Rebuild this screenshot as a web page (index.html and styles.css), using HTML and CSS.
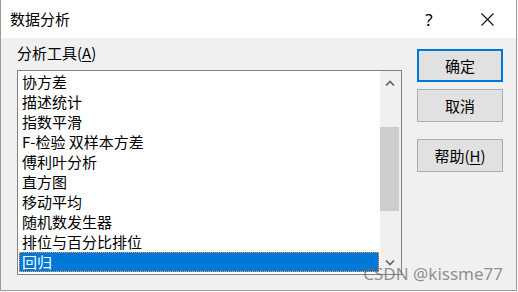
FILE: index.html
```html
<!DOCTYPE html>
<html lang="zh-CN">
<head>
  <meta charset="UTF-8">
  <title>数据分析</title>
  <link rel="stylesheet" href="styles.css">
</head>
<body>
  <div class="dialog">
    <div class="titlebar">
      <span class="title">数据分析</span>
      <span class="help-btn">?</span>
      <span class="close-btn">
        <svg width="13" height="13" viewBox="0 0 13 13"><path d="M0.5 0.5 L12.5 12.5 M12.5 0.5 L0.5 12.5" stroke="#111" stroke-width="1.1" fill="none"/></svg>
      </span>
    </div>

    <div class="content">
      <div class="left-panel">
        <div class="label">分析工具(<u>A</u>)</div>
        <div class="listbox">
          <ul class="items">
            <li>协方差</li>
            <li>描述统计</li>
            <li>指数平滑</li>
            <li>F-检验 双样本方差</li>
            <li>傅利叶分析</li>
            <li>直方图</li>
            <li>移动平均</li>
            <li>随机数发生器</li>
            <li>排位与百分比排位</li>
            <li class="selected">回归</li>
          </ul>
          <div class="scrollbar">
            <div class="arrow">
              <svg width="10" height="6" viewBox="0 0 10 6"><polyline points="1,5.5 5,1.5 9,5.5" stroke="#606060" stroke-width="1.6" fill="none"/></svg>
            </div>
            <div class="track"><div class="thumb"></div></div>
            <div class="arrow">
              <svg width="10" height="6" viewBox="0 0 10 6"><polyline points="1,0.5 5,4.5 9,0.5" stroke="#606060" stroke-width="1.6" fill="none"/></svg>
            </div>
          </div>
        </div>
      </div>

      <div class="buttons">
        <button class="btn default">确定</button>
        <button class="btn">取消</button>
        <button class="btn help">帮助(<u>H</u>)</button>
      </div>
    </div>

    <div class="watermark">CSDN @kissme77</div>
  </div>
</body>
</html>
```

FILE: styles.css
```css
* {
  box-sizing: border-box;
  margin: 0;
  padding: 0;
}

body {
  font-family: "Noto Sans CJK SC", "Noto Sans", sans-serif;
  font-size: 15px;
  color: #000;
  background: #f9f9f9;
}

.dialog {
  position: relative;
  width: 517px;
  height: 291px;
  background: #f0f0f0;
  border: 1px solid #9a9a9a;
  border-top: none;
}

.titlebar {
  height: 38px;
  background: white;
  display: flex;
  align-items: center;
  padding-left: 9px;
}

.title {
  flex: 1;
  line-height: 20px;
  margin-top: -1px;
}

.help-btn {
  width: 58px;
  text-align: center;
  font-family: "Noto Sans", sans-serif;
  font-size: 17px;
  line-height: 20px;
  margin-top: 1px;
}

.close-btn {
  width: 58px;
  display: flex;
  justify-content: center;
  margin-right: 0;
}

.content {
  display: flex;
  padding-left: 16px;
}

.label {
  line-height: 20px;
  margin-top: 5px;
  margin-bottom: 7px;
}

.label u,
.btn u {
  text-decoration-thickness: 1px;
  text-underline-offset: 2px;
}

.listbox {
  width: 385px;
  height: 205px;
  background: white;
  border: 1px solid #828282;
  display: flex;
  padding: 1px 0 1px 1px;
}

.items {
  list-style: none;
  flex: 1;
}

.items li {
  height: 20px;
  line-height: 20px;
  padding-left: 3px;
  white-space: nowrap;
}

.items li.selected {
  background: #0078d7;
  color: white;
  border: 1px dotted #ff9a3c;
  line-height: 18px;
  padding-left: 2px;
  margin-right: 1px;
}

.scrollbar {
  width: 21px;
  margin-top: -1px;
  margin-bottom: -1px;
  background: #f0f0f0;
  display: flex;
  flex-direction: column;
}

.arrow {
  height: 23px;
  display: flex;
  align-items: center;
  justify-content: center;
  padding-right: 2px;
}

.track {
  flex: 1;
  padding-top: 33px;
  padding-right: 2px;
}

.thumb {
  height: 84px;
  background: #cdcdcd;
}

.buttons {
  display: flex;
  flex-direction: column;
  margin-left: 15px;
  margin-top: 11px;
}

.btn {
  width: 86px;
  height: 33px;
  font-family: "Noto Sans CJK SC", "Noto Sans", sans-serif;
  font-size: 15px;
  color: #000;
  background: #e1e1e1;
  border: 1px solid #adadad;
  margin-bottom: 7px;
  line-height: 20px;
}

.btn.default {
  border: 2px solid #0078d7;
}

.btn.help {
  margin-top: 10px;
}

.watermark {
  position: absolute;
  right: 13px;
  bottom: 6px;
  font-family: "Noto Sans", sans-serif;
  font-size: 17px;
  line-height: 20px;
  color: rgba(110, 110, 110, 0.75);
}
```
